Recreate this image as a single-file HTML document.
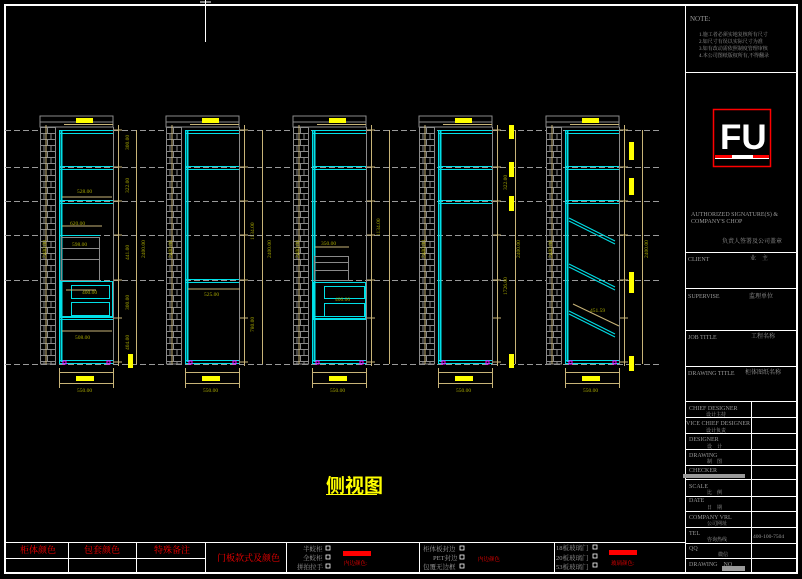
<!DOCTYPE html>
<html><head><meta charset="utf-8"><style>
html,body{margin:0;padding:0;background:#000;}
svg{display:block}
text{font-family:"Liberation Serif","Noto Serif CJK SC",serif;}
</style></head><body>
<svg width="802" height="579" viewBox="0 0 802 579" xmlns="http://www.w3.org/2000/svg">
<defs>
<pattern id="brick" x="0" y="127" width="15" height="12" patternUnits="userSpaceOnUse">
<rect width="15" height="12" fill="#000"/>
<path d="M0 0.5H15M0 6.5H15M7.5 0V6M4 6V12M11 6V12" stroke="#8a8a8a" stroke-width="1" fill="none"/>
</pattern>
<g id="cab">
<rect x="0" y="116" width="73" height="11" fill="none" stroke="#8a8a8a"/>
<line x1="0" y1="122" x2="73" y2="122" stroke="#8a8a8a"/>
<rect x="36" y="118" width="17" height="5" fill="#ffff00"/>
<rect x="0.5" y="127" width="15" height="237" fill="url(#brick)" stroke="#8a8a8a"/>
<line x1="6" y1="125" x2="6" y2="364" stroke="#c8b478"/>
<line x1="24" y1="124.5" x2="73" y2="124.5" stroke="#c8b478"/>
<rect x="19.5" y="130.5" width="54" height="233" fill="none" stroke="#00e0e8"/>
<line x1="21.5" y1="131" x2="21.5" y2="362" stroke="#00e0e8" stroke-width="2"/>
<line x1="20" y1="133.5" x2="73" y2="133.5" stroke="#00e0e8"/>
<line x1="20" y1="360.5" x2="73" y2="360.5" stroke="#00e0e8"/>
<line x1="73.5" y1="127" x2="73.5" y2="364" stroke="#8a8a8a"/>
<rect x="23" y="361" width="3" height="3" fill="none" stroke="#ff00ff"/>
<rect x="67" y="361" width="3" height="3" fill="none" stroke="#ff00ff"/>
<line x1="78.5" y1="125" x2="78.5" y2="366" stroke="#c8b478"/>
<line x1="96.5" y1="130" x2="96.5" y2="364" stroke="#c8b478"/>
<line x1="19" y1="372.5" x2="73" y2="372.5" stroke="#c8b478"/>
<line x1="19" y1="383.5" x2="73" y2="383.5" stroke="#c8b478"/>
<line x1="19.5" y1="368" x2="19.5" y2="388" stroke="#c8b478"/>
<line x1="73.5" y1="368" x2="73.5" y2="388" stroke="#c8b478"/>
<rect x="36" y="376" width="18" height="5" fill="#ffff00"/>
<path d="M74 130h8M74 167h8M74 201h8M74 235h8M74 280h8M74 318h8M74 362h8" stroke="#c8b478"/>
</g>
<g id="sh"><line x1="20" y1="0.5" x2="73" y2="0.5" stroke="#00e0e8"/><line x1="20" y1="3.5" x2="73" y2="3.5" stroke="#00e0e8"/></g>
</defs>
<rect width="802" height="579" fill="#000"/>
<rect x="5" y="5" width="792" height="568" fill="none" stroke="#fff" stroke-width="2"/>
<line x1="685.5" y1="5" x2="685.5" y2="573" stroke="#fff"/>
<line x1="205.5" y1="0" x2="205.5" y2="42" stroke="#fff"/>
<line x1="200" y1="2" x2="211" y2="2" stroke="#fff"/>
<g stroke="#9a9a9a" stroke-dasharray="6,3">
<line x1="5" y1="130.5" x2="660" y2="130.5"/>
<line x1="5" y1="167.5" x2="660" y2="167.5"/>
<line x1="5" y1="201.5" x2="660" y2="201.5"/>
<line x1="5" y1="235.5" x2="660" y2="235.5"/>
<line x1="5" y1="280.5" x2="660" y2="280.5"/>
<line x1="5" y1="364.5" x2="660" y2="364.5"/>
</g>
<use href="#cab" x="40"/><use href="#cab" x="166"/><use href="#cab" x="293"/><use href="#cab" x="419"/><use href="#cab" x="546"/>
<use href="#sh" x="40" y="166"/><use href="#sh" x="40" y="200"/>
<line x1="61" y1="235.5" x2="100" y2="235.5" stroke="#00e0e8"/>
<rect x="61.5" y="237.5" width="38" height="43" fill="none" stroke="#8a8a8a"/>
<path d="M62 248.5h38M62 259.5h38" stroke="#8a8a8a"/>
<rect x="60.5" y="281.5" width="52" height="36" fill="none" stroke="#00e0e8"/>
<rect x="71.5" y="285.5" width="38" height="13" fill="none" stroke="#00e0e8"/>
<rect x="71.5" y="302.5" width="38" height="13" fill="none" stroke="#00e0e8"/>
<use href="#sh" x="40" y="316"/>
<path d="M62 197h50M62 226h40M62 331h50M96 290h-30" stroke="#c8b478"/>
<use href="#sh" x="166" y="166"/><use href="#sh" x="166" y="279"/>
<path d="M188 289h52" stroke="#c8b478"/>
<use href="#sh" x="293" y="166"/>
<rect x="314.5" y="256.5" width="34" height="24" fill="none" stroke="#8a8a8a"/>
<path d="M315 262.5h34M315 270.5h34" stroke="#8a8a8a"/>
<rect x="313.5" y="282.5" width="52" height="36" fill="none" stroke="#00e0e8"/>
<rect x="324.5" y="286.5" width="40" height="12" fill="none" stroke="#00e0e8"/>
<rect x="324.5" y="303.5" width="40" height="13" fill="none" stroke="#00e0e8"/>
<use href="#sh" x="293" y="316"/>
<path d="M315 247h34" stroke="#c8b478"/>
<use href="#sh" x="419" y="166"/><use href="#sh" x="419" y="200"/>
<g fill="#ffff00"><rect x="509" y="125" width="5" height="14"/><rect x="509" y="162" width="5" height="15"/><rect x="509" y="196" width="5" height="15"/><rect x="509" y="354" width="5" height="14"/></g>
<use href="#sh" x="546" y="166"/><use href="#sh" x="546" y="200"/>
<g stroke="#00e0e8"><path d="M569 218l46 23M569 221l46 23M569 264l46 23M569 267l46 23M569 311l46 23M569 314l46 23"/></g>
<path d="M573 304l46 22" stroke="#c8b478"/>
<g fill="#ffff00"><rect x="629" y="142" width="5" height="18"/><rect x="629" y="178" width="5" height="17"/><rect x="629" y="272" width="5" height="21"/><rect x="629" y="356" width="5" height="15"/></g>
<rect x="128" y="354" width="5" height="14" fill="#ffff00"/>
<g fill="#a8a800" style="font-size:5.5px">
<text x="77" y="193">528.00</text><text x="70" y="225">620.00</text><text x="72" y="246">598.00</text><text x="82" y="294">400.00</text><text x="75" y="339">508.00</text>
<text x="204" y="296">525.00</text><text x="321" y="245">350.00</text><text x="335" y="301">400.00</text><text x="590" y="312">451.59</text>
<text x="77" y="392">550.00</text><text x="203" y="392">550.00</text><text x="330" y="392">550.00</text><text x="456" y="392">550.00</text><text x="583" y="392">550.00</text>
<text transform="translate(129,150) rotate(-90)">300.00</text><text transform="translate(129,193) rotate(-90)">322.00</text><text transform="translate(129,260) rotate(-90)">441.00</text><text transform="translate(129,310) rotate(-90)">300.00</text><text transform="translate(129,350) rotate(-90)">404.00</text>
<text transform="translate(145,258) rotate(-90)">2400.00</text><text transform="translate(271,258) rotate(-90)">2400.00</text><text transform="translate(520,258) rotate(-90)">2400.00</text><text transform="translate(648,258) rotate(-90)">2400.00</text>
<text transform="translate(254,240) rotate(-90)">1134.00</text><text transform="translate(254,332) rotate(-90)">780.00</text><text transform="translate(380,236) rotate(-90)">1134.00</text><text transform="translate(507,190) rotate(-90)">322.00</text><text transform="translate(507,295) rotate(-90)">1726.00</text>
<text transform="translate(46,258) rotate(-90)">2400.00</text><text transform="translate(172,258) rotate(-90)">2400.00</text><text transform="translate(299,258) rotate(-90)">2400.00</text><text transform="translate(425,258) rotate(-90)">2400.00</text><text transform="translate(552,258) rotate(-90)">2400.00</text>
</g>
<text x="326" y="492" fill="#ffff00" style="font-size:19px;font-weight:bold;font-family:'Liberation Sans','Noto Sans CJK SC',sans-serif">侧视图</text>
<line x1="326" y1="494.5" x2="377" y2="494.5" stroke="#ffff00"/>
<g stroke="#fff" fill="none">
<path d="M686 72.5H797M686 252.5H797M686 288.5H797M686 330.5H797M686 366.5H797M686 401.5H797M686 417.5H797M686 433.5H797M686 449.5H797M686 465.5H797M686 479.5H797M686 496.5H797M686 511.5H797M686 527.5H797M686 543.5H797M686 558.5H797M751.5 401V573"/>
</g>
<g fill="#9a9a9a" style="font-size:6px">
<text x="690" y="21" style="font-size:7px">NOTE:</text>
<text x="699" y="36" style="font-size:5px">1.施工者必须实地复核所有尺寸</text>
<text x="699" y="43" style="font-size:5px">2.如尺寸有误以实际尺寸为准</text>
<text x="699" y="50" style="font-size:5px">3.如有改动需依照制度管理审核</text>
<text x="699" y="57" style="font-size:5px">4.本公司图纸版权所有,不得翻录</text>
<text x="691" y="216">AUTHORIZED SIGNATURE(S) &amp;</text>
<text x="691" y="223">COMPANY'S CHOP</text>
<text x="722" y="243">负责人签署及公司盖章</text>
<text x="688" y="261">CLIENT</text><text x="750" y="260">业　主</text>
<text x="688" y="298">SUPERVISE</text><text x="749" y="298">监理单位</text>
<text x="688" y="339">JOB TITLE</text><text x="751" y="338">工程名称</text>
<text x="688" y="375">DRAWING TITLE</text><text x="745" y="374">柜体图纸名称</text>
<text x="689" y="410">CHIEF DESIGNER</text><text x="706" y="416" style="font-size:5px">设计主持</text>
<text x="686" y="425">VICE CHIEF DESIGNER</text><text x="706" y="432" style="font-size:5px">设计负责</text>
<text x="689" y="441">DESIGNER</text><text x="707" y="448" style="font-size:5px">设　计</text>
<text x="689" y="457">DRAWING</text><text x="707" y="463" style="font-size:5px">制　图</text>
<text x="689" y="472">CHECKER</text>
<text x="689" y="488">SCALE</text><text x="707" y="494" style="font-size:5px">比　例</text>
<text x="689" y="502">DATE</text><text x="707" y="509" style="font-size:5px">日　期</text>
<text x="689" y="519">COMPANY VRL</text><text x="707" y="525" style="font-size:5px">公司网址</text>
<text x="689" y="535">TEL</text><text x="707" y="541" style="font-size:5px">咨询热线</text>
<text x="753" y="538" style="font-size:5.5px">400-100-7504</text>
<text x="689" y="550">QQ</text><text x="718" y="556" style="font-size:5px">微信</text>
<text x="689" y="566">DRAWING　NO</text>
</g>
<rect x="683" y="474" width="62" height="4" fill="#9a9a9a"/>
<rect x="722" y="566" width="23" height="5" fill="#9a9a9a"/>
<rect x="713.5" y="109.5" width="57" height="57" fill="none" stroke="#f00" stroke-width="1.5"/>
<text x="720" y="149" fill="#fff" style="font-size:35px;font-weight:bold;font-family:'Liberation Sans',sans-serif">FU</text>
<rect x="715" y="155" width="54" height="3" fill="#f00"/>
<rect x="732" y="155" width="21" height="3" fill="#fff"/>
<rect x="715" y="158" width="54" height="1" fill="#fff"/>
<g stroke="#fff" fill="none">
<path d="M5 542.5H686M5 558.5H205M68.5 542V573M136.5 542V573M205.5 542V573M286.5 542V573M419.5 542V573M554.5 542V573"/>
</g>
<g fill="#f00" style="font-size:9px">
<text x="20" y="553">柜体颜色</text><text x="84" y="553">包套颜色</text><text x="154" y="553">特殊备注</text><text x="217" y="561">门板款式及颜色</text>
</g>
<g fill="#9a9a9a" style="font-size:6.5px">
<text x="303" y="551">半蛟柜</text><text x="303" y="560">全蛟柜</text><text x="297" y="569">拼拍拉手</text>
<text x="423" y="551">柜体板封边</text><text x="433" y="560">PET封边</text><text x="423" y="569">包覆无边框</text>
<text x="556" y="550">18板玻璃门</text><text x="556" y="560">20板玻璃门</text><text x="556" y="569">53板玻璃门</text>
</g>
<g fill="none" stroke="#fff" stroke-width="0.8">
<rect x="326" y="546" width="4" height="4"/><rect x="326" y="555" width="4" height="4"/><rect x="326" y="564" width="4" height="4"/>
<rect x="460" y="546" width="4" height="4"/><rect x="460" y="555" width="4" height="4"/><rect x="460" y="564" width="4" height="4"/>
<rect x="593" y="545" width="4" height="4"/><rect x="593" y="554" width="4" height="4"/><rect x="593" y="563" width="4" height="4"/>
</g>
<rect x="343" y="551" width="28" height="5" fill="#f00"/>
<rect x="609" y="550" width="28" height="5" fill="#f00"/>
<g fill="#f00" style="font-size:5.5px"><text x="344" y="565">内边颜色:</text><text x="478" y="561">内边颜色</text><text x="611" y="565">玻璃颜色:</text></g>
</svg>
</body></html>
